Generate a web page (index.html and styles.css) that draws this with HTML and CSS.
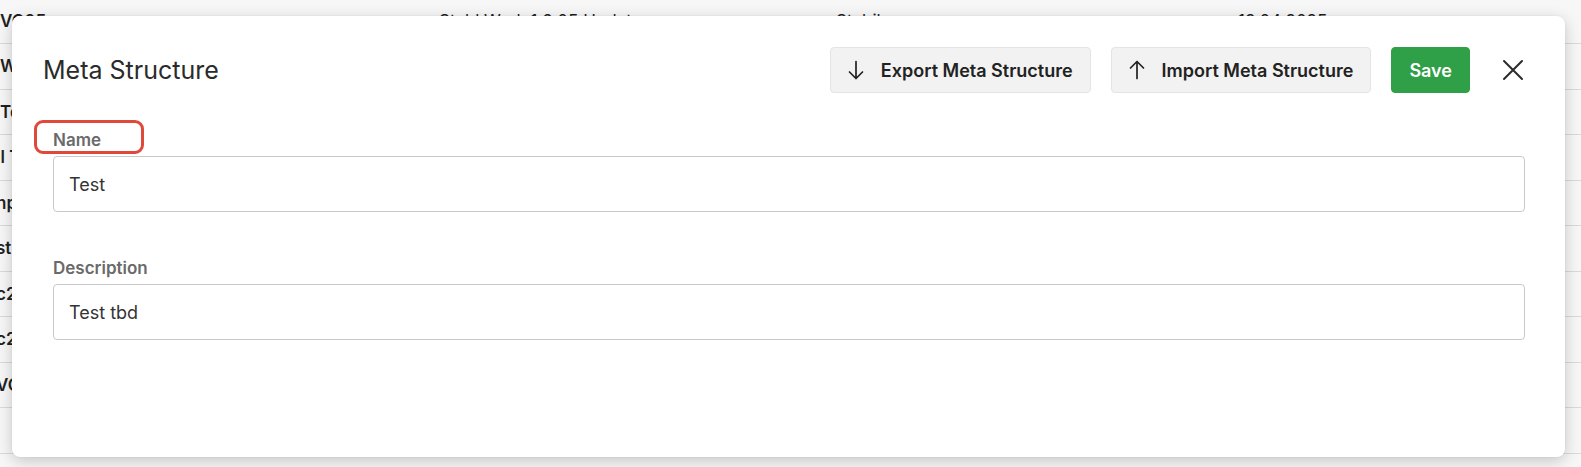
FILE: index.html
```html
<!DOCTYPE html>
<html lang="en">
<head>
<meta charset="utf-8">
<title>Meta Structure</title>
<link rel="stylesheet" href="styles.css">
</head>
<body>
<div class="table">
  <div class="row first"><span class="c1">VC05</span><span class="c2">Stahl Werk 1.6 05 Update</span><span class="c3">Stabil</span><span class="c4">13.04.2025</span></div>
  <div class="row"><span class="c1">WC</span></div>
  <div class="row"><span class="c1">Te</span></div>
  <div class="row"><span class="c1 shift">il T</span></div>
  <div class="row"><span class="c1 shift">np</span></div>
  <div class="row"><span class="c1 shift">st</span></div>
  <div class="row"><span class="c1 shift">c2</span></div>
  <div class="row"><span class="c1 shift">c2</span></div>
  <div class="row"><span class="c1 shift">VC</span></div>
  <div class="row"></div>
</div>

<div class="modal" role="dialog" aria-label="Meta Structure">
  <header class="modal-head">
    <h2 class="modal-title">Meta Structure</h2>
    <div class="actions">
      <button class="btn" type="button">
        <svg class="arrow" width="16" height="20" viewBox="0 0 16 20" aria-hidden="true"><path d="M8 1.5V18.5M1.5 12L8 18.5L14.5 12" fill="none" stroke="#222" stroke-width="1.7" stroke-linecap="round" stroke-linejoin="round"/></svg>
        Export Meta Structure
      </button>
      <button class="btn" type="button">
        <svg class="arrow" width="16" height="20" viewBox="0 0 16 20" aria-hidden="true"><path d="M8 18.5V1.5M1.5 8L8 1.5L14.5 8" fill="none" stroke="#222" stroke-width="1.7" stroke-linecap="round" stroke-linejoin="round"/></svg>
        Import Meta Structure
      </button>
      <button class="btn btn-save" type="button">Save</button>
    </div>
    <button class="close" type="button" aria-label="Close">
      <svg width="24" height="24" viewBox="0 0 24 24" aria-hidden="true"><path d="M3 3L21 21M21 3L3 21" fill="none" stroke="#2a2a2a" stroke-width="2" stroke-linecap="round"/></svg>
    </button>
  </header>

  <form class="form">
    <div class="field">
      <label class="label">Name<span class="mark"></span></label>
      <div class="input">Test</div>
    </div>
    <div class="field">
      <label class="label">Description</label>
      <div class="input">Test tbd</div>
    </div>
  </form>
</div>
</body>
</html>
```
FILE: styles.css
```css
html, body {
  margin: 0;
  padding: 0;
}

body {
  background: #f7f7f7;
  font-family: Inter, "Noto Sans", "Liberation Sans", sans-serif;
  overflow: hidden;
  height: 467px;
  position: relative;
}

/* background table */
.table {
  margin-top: -1.5px;
}

.row {
  box-sizing: border-box;
  height: 45.5px;
  border-bottom: 1px solid #dadada;
  display: flex;
  align-items: center;
  font-size: 17px;
  font-weight: 600;
  color: #1f1f1f;
  white-space: nowrap;
}

.c1 {
  width: 430px;
  margin-left: 0;
}

.c1.shift {
  margin-left: -4px;
}

.c2 {
  width: 397px;
  margin-left: 9px;
  font-weight: 400;
}

.c3 {
  width: 402px;
  font-weight: 400;
}

.c4 {
  font-weight: 400;
}

.first {
  align-items: flex-end;
  padding-bottom: 12px;
}

/* modal */
.modal {
  position: absolute;
  left: 12px;
  top: 16px;
  width: 1553px;
  height: 441px;
  box-sizing: border-box;
  background: #fff;
  border-radius: 8px;
  box-shadow: 0 4px 16px rgba(0, 0, 0, 0.2), 0 0 2px rgba(0, 0, 0, 0.08);
  padding: 31px 40px 0 31px;
}

.modal-head {
  display: flex;
  align-items: center;
  height: 46px;
}

.modal-title {
  margin: 0;
  font-size: 25px;
  font-weight: 400;
  color: #2b2b2b;
  letter-spacing: 0;
}

.actions {
  margin-left: auto;
  display: flex;
  align-items: center;
  gap: 20px;
}

.btn {
  box-sizing: border-box;
  height: 46px;
  display: flex;
  align-items: center;
  gap: 17px;
  padding: 0 17px;
  background: #f2f2f2;
  border: 1px solid #e4e4e4;
  border-radius: 4px;
  font-family: Inter, "Noto Sans", "Liberation Sans", sans-serif;
  font-size: 18px;
  font-weight: 600;
  color: #222;
  cursor: pointer;
}

.arrow {
  display: block;
  flex: none;
}

.btn-save {
  background: #2f9f48;
  border-color: #2f9f48;
  color: #fff;
  padding: 0 17px;
}

.close {
  margin-left: 31px;
  width: 24px;
  height: 24px;
  padding: 0;
  border: 0;
  background: none;
  display: flex;
  align-items: center;
  justify-content: center;
  cursor: pointer;
}

.close svg {
  display: block;
}

.form {
  margin: 37px 0 0 10px;
}

.field + .field {
  margin-top: 46px;
}

.label {
  position: relative;
  display: block;
  font-size: 17px;
  line-height: 20px;
  font-weight: 600;
  color: #6a6a6a;
  margin-bottom: 6px;
}

.mark {
  position: absolute;
  left: -19px;
  top: -10px;
  width: 110px;
  height: 34px;
  box-sizing: border-box;
  border: 3px solid #e0493a;
  border-radius: 9px;
}

.input {
  box-sizing: border-box;
  height: 56px;
  border: 1px solid #c9c9c9;
  border-radius: 4px;
  padding: 0 15px;
  display: flex;
  align-items: center;
  font-size: 18px;
  color: #333;
}
```
